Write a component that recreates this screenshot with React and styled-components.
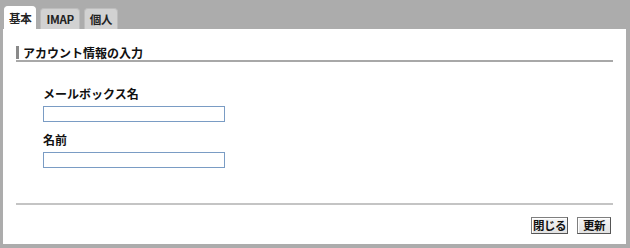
import React from 'react';
import styled, { createGlobalStyle } from 'styled-components';

const GlobalStyle = createGlobalStyle`
  html, body {
    margin: 0;
    padding: 0;
    background: #acacac;
  }
  body {
    font-family: "MS UI Gothic", "Noto Sans CJK JP", "DejaVu Sans", sans-serif;
    font-size: 12px;
    color: #111;
  }
`;

const Page = styled.div`
  width: 630px;
  height: 248px;
  padding: 6px 4px 4px 3px;
  box-sizing: border-box;
  display: flex;
  flex-direction: column;
`;

const TabBar = styled.div`
  display: flex;
  align-items: flex-end;
  gap: 4px;
  height: 23px;
  padding-left: 1px;
`;

const Tab = styled.div`
  height: ${p => (p.active ? '23px' : '21px')};
  padding: 0 ${p => p.pad || 4}px;
  box-sizing: border-box;
  display: flex;
  align-items: center;
  border-radius: 4px 4px 0 0;
  background: ${p => (p.active ? '#ffffff' : '#d2d2d2')};
  border: 1px solid ${p => (p.active ? '#ffffff' : '#bdbdbd')};
  border-bottom: none;
  font-weight: bold;
  font-size: 11.5px;
  letter-spacing: -0.3px;
  color: #222;
`;

const Panel = styled.div`
  flex: 1;
  background: #ffffff;
  padding: 16px 13px 0 13px;
  display: flex;
  flex-direction: column;
`;

const SectionTitle = styled.div`
  display: flex;
  align-items: center;
  gap: 4px;
  height: 14px;
  padding-bottom: 1px;
  border-bottom: 2px solid #a8a8a8;
  font-weight: bold;
  font-size: 12px;
  color: #111;

  &::before {
    content: '';
    width: 3px;
    height: 13px;
    background: #8a8a8a;
  }
`;

const Fields = styled.div`
  padding: 24px 0 0 27px;
  display: flex;
  flex-direction: column;
`;

const Label = styled.div`
  font-size: 12px;
  font-weight: bold;
  line-height: 16px;
  margin-top: ${p => p.top || 0}px;
  margin-bottom: 4px;
  color: #111;
`;

const TextInput = styled.input`
  width: 182px;
  height: 16px;
  box-sizing: border-box;
  border: 1px solid #7a9cc4;
  padding: 0 2px;
  margin: 0;
  outline: none;
  background: #fff;
`;

const Divider = styled.div`
  margin-top: 35px;
  height: 2px;
  background: #c4c4c4;
`;

const Footer = styled.div`
  display: flex;
  justify-content: flex-end;
  gap: 9px;
  padding: 12px 2px 0 0;
`;

const Button = styled.button`
  width: ${p => p.w}px;
  height: 17px;
  padding: 0;
  font-family: inherit;
  font-size: 11.5px;
  font-weight: bold;
  letter-spacing: -0.5px;
  line-height: 15px;
  color: #111;
  background: linear-gradient(#f6f6f6, #e2e2e2);
  border: 1px solid #7f7f7f;
  border-right-color: #555;
  border-bottom-color: #555;
  box-shadow: inset 1px 1px 0 #ffffff;
  cursor: pointer;
`;

export default function App() {
  return (
    <>
      <GlobalStyle />
      <Page>
        <TabBar>
          <Tab active>基本</Tab>
          <Tab pad={5}>IMAP</Tab>
          <Tab pad={5}>個人</Tab>
        </TabBar>
        <Panel>
          <SectionTitle>アカウント情報の入力</SectionTitle>
          <Fields>
            <Label>メールボックス名</Label>
            <TextInput />
            <Label top={10}>名前</Label>
            <TextInput />
          </Fields>
          <Divider />
          <Footer>
            <Button w={37}>閉じる</Button>
            <Button w={34}>更新</Button>
          </Footer>
        </Panel>
      </Page>
    </>
  );
}
